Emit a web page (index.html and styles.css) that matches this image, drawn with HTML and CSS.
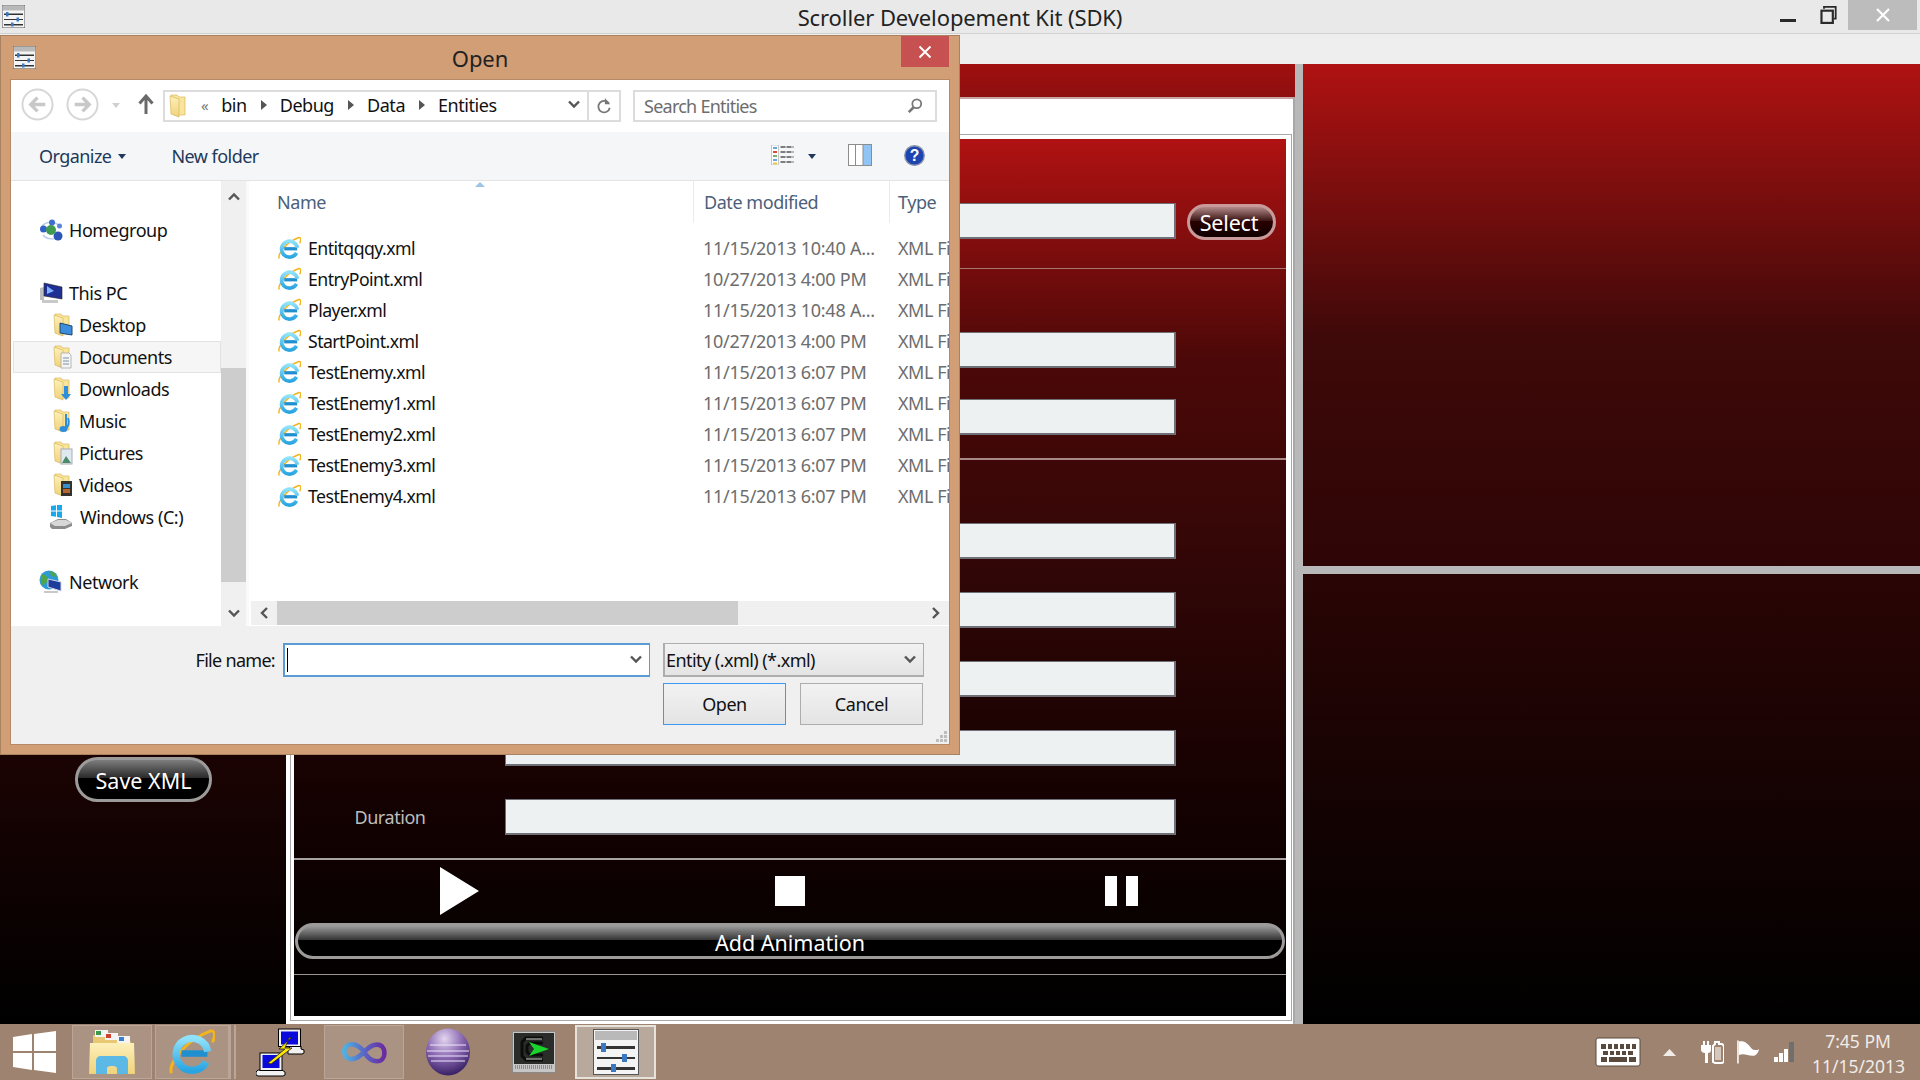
FILE: index.html
```html
<!DOCTYPE html>
<html lang="en">
<head>
<meta charset="utf-8">
<title>Scroller Developement Kit (SDK)</title>
<link rel="stylesheet" href="styles.css">
</head>
<body>
<svg class="defs" aria-hidden="true">
  <defs>
    <linearGradient id="gFolder" x1="0" y1="0" x2="0" y2="1"><stop offset="0" stop-color="#fdf0ba"/><stop offset="1" stop-color="#f0d27a"/></linearGradient>
    <linearGradient id="gE" x1="0" y1="0" x2="0" y2="1"><stop offset="0" stop-color="#8fe2fa"/><stop offset="1" stop-color="#2aa5e2"/></linearGradient>
    <radialGradient id="gSphere" cx=".42" cy=".22" r=".9"><stop offset="0" stop-color="#e2d6ee"/><stop offset=".45" stop-color="#8a68b2"/><stop offset=".85" stop-color="#3c2468"/><stop offset="1" stop-color="#2a1650"/></radialGradient>
    <linearGradient id="gInf" x1="0" y1="0" x2="1" y2="0"><stop offset="0" stop-color="#4fb0e2"/><stop offset=".5" stop-color="#5a66c4"/><stop offset="1" stop-color="#6a2aa0"/></linearGradient>
    <symbol id="i-app" viewBox="0 0 46 46">
      <rect x=".5" y=".5" width="45" height="45" fill="#f4f4f4" stroke="#555"/>
      <rect x="2" y="2" width="42" height="9" fill="#b9b9b9"/>
      <rect x="4" y="17" width="38" height="3" fill="#333"/><rect x="8" y="14" width="5" height="9" fill="#3b78c4"/>
      <rect x="4" y="28" width="38" height="2" fill="#333"/><rect x="29" y="25" width="5" height="8" fill="#3b78c4"/>
      <rect x="4" y="38" width="38" height="3" fill="#333"/><rect x="18" y="35" width="5" height="8" fill="#3b78c4"/>
    </symbol>
    <symbol id="i-ie" viewBox="0 0 24 24">
      <path d="M1.300 23C-.6 18.500 8 6 21.800 1c2.200-.4 2.400 2.600.9 6" fill="none" stroke="#f2b51f" stroke-width="1.500"/>
      <path d="M6.500 12.800h13.500" stroke="#1f8fd0" stroke-width="3.400"/>
      <path d="M19.300 17.200A8.300 8.300 0 1 1 20.200 11.800" fill="none" stroke="url(#gE)" stroke-width="3.800"/>
    </symbol>
    <symbol id="i-folder" viewBox="0 0 20 24">
      <path d="M2 1h6l2 2h6v18H5z" fill="#f9e49b" stroke="#d9b75c" stroke-width=".7"/>
      <path d="M1 2l9 3v18l-8-3z" fill="url(#gFolder)" stroke="#d9b75c" stroke-width=".7"/>
    </symbol>
    <symbol id="i-back" viewBox="0 0 34 34">
      <circle cx="17" cy="17" r="15.500" fill="#fff" stroke="#d6d6d6" stroke-width="2"/>
      <path d="M25 17H11M17 10l-7 7 7 7" fill="none" stroke="#c8c8c8" stroke-width="3.400"/>
    </symbol>
    <symbol id="i-chev" viewBox="0 0 14 10">
      <path d="M2 1.500l5 5 5-5" fill="none" stroke="#555" stroke-width="2.400"/>
    </symbol>
  </defs>
</svg>

<div class="app">
  <header class="titlebar">
    <div class="tb-left"><svg class="tb-icon"><use href="#i-app"/></svg></div>
    <div class="tb-title">Scroller Developement Kit (SDK)</div>
    <div class="tb-right">
      <svg class="wc-min" viewBox="0 0 16 3"><rect width="16" height="3" fill="#2a2a2a"/></svg>
      <svg class="wc-res" viewBox="0 0 18 20"><path d="M4 3V1h13v13h-2" fill="none" stroke="#2a2a2a" stroke-width="2"/><rect x="1.200" y="5.200" width="12.600" height="13.600" fill="none" stroke="#2a2a2a" stroke-width="2.400"/></svg>
      <div class="wc-close"><svg viewBox="0 0 14 14" class="wc-x"><path d="M1 1l12 12M13 1L1 13" stroke="#fff" stroke-width="2.200"/></svg></div>
    </div>
  </header>
  <div class="menustrip"></div>
  <main class="workspace">
    <aside class="left">
      <button class="gloss btn-save">Save XML</button>
    </aside>
    <section class="center">
      <div class="strip"></div>
      <div class="frame">
        <div class="inset">
          <div class="panel">
            <div class="sec sec-a">
              <div class="row"><div class="label"></div><div class="input"></div><button class="gloss btn-select">Select</button></div>
            </div>
            <div class="sec sec-b">
              <div class="row"><div class="label"></div><div class="input"></div></div>
              <div class="row"><div class="label"></div><div class="input"></div></div>
            </div>
            <div class="sec sec-c">
              <div class="row"><div class="label"></div><div class="input"></div></div>
              <div class="row"><div class="label"></div><div class="input"></div></div>
              <div class="row"><div class="label"></div><div class="input"></div></div>
              <div class="row"><div class="label"></div><div class="input"></div></div>
              <div class="row"><div class="label">Duration</div><div class="input"></div></div>
            </div>
            <div class="controls">
              <svg class="c-play" viewBox="0 0 39 48"><path d="M0 0l39 24L0 48z" fill="#fff"/></svg>
              <div class="c-stop"></div>
              <div class="c-pause"><span></span><span></span></div>
            </div>
            <button class="gloss btn-add">Add Animation</button>
            <div class="panel-rule"></div>
          </div>
        </div>
      </div>
    </section>
    <div class="vsplit"></div>
    <section class="right">
      <div class="r-top"></div>
      <div class="hsplit"></div>
      <div class="r-bottom"></div>
    </section>
  </main>
</div>

<div class="dialog">
  <div class="dlg-head">
    <svg class="dlg-icon"><use href="#i-app"/></svg>
    <div class="dlg-title">Open</div>
    <div class="dlg-close"><svg viewBox="0 0 14 14" class="wc-x"><path d="M1.500 1.500l11 11M12.500 1.500l-11 11" stroke="#fff" stroke-width="2"/></svg></div>
  </div>
  <div class="dlg-body">
    <div class="addr-row">
      <svg class="nav-btn"><use href="#i-back"/></svg>
      <svg class="nav-btn nav-fwd"><use href="#i-back"/></svg>
      <svg class="nav-drop" viewBox="0 0 8 5"><path d="M0 0h8L4 5z" fill="#d0d0d0"/></svg>
      <svg class="nav-up" viewBox="0 0 16 20"><path d="M8 20V3M1.500 9.500L8 2l6.500 7.500" fill="none" stroke="#6a6a6a" stroke-width="3"/></svg>
      <div class="addr">
        <svg class="addr-folder" viewBox="0 0 17 24"><use href="#i-folder" width="20" height="24"/></svg>
        <span class="crumb-more">«</span>
        <span class="crumb">bin</span><i class="tri"></i>
        <span class="crumb">Debug</span><i class="tri"></i>
        <span class="crumb">Data</span><i class="tri"></i>
        <span class="crumb">Entities</span>
        <svg class="addr-chev"><use href="#i-chev"/></svg>
        <div class="addr-ref"><svg viewBox="0 0 18 20" class="ref-icon"><path d="M14.500 7A6.500 6.500 0 1 0 15.500 12" fill="none" stroke="#777" stroke-width="2"/><path d="M10 1v7h6z" fill="#777"/></svg></div>
      </div>
      <div class="search">
        <span>Search Entities</span>
        <svg class="search-icon" viewBox="0 0 18 18"><circle cx="11" cy="7" r="5" fill="none" stroke="#777" stroke-width="2"/><path d="M7.500 11L2 16.500" stroke="#777" stroke-width="3"/></svg>
      </div>
    </div>
    <div class="toolbar">
      <span class="tool">Organize</span><i class="caret"></i>
      <span class="tool tool-new">New folder</span>
      <svg class="view-icon" viewBox="0 0 22 20"><rect x="0" y="0" width="7" height="20" fill="#fff" stroke="#b9b9b9" stroke-width=".8"/><path d="M1.500 3h4" stroke="#6aa7d8" stroke-width="2"/><path d="M1.500 7h4" stroke="#d94a3a" stroke-width="2"/><path d="M1.500 11h4" stroke="#7cb36a" stroke-width="2"/><path d="M1.500 15h4" stroke="#6aa7d8" stroke-width="2"/><path d="M1.500 18.500h4" stroke="#e6c34a" stroke-width="2"/><path d="M9 2h13M9 7h13M9 12h13M9 17h13" stroke="#555" stroke-width="1.400" stroke-dasharray="5 1"/></svg>
      <i class="caret caret-view"></i>
      <svg class="pane-icon" viewBox="0 0 24 22"><rect x=".5" y=".5" width="23" height="21" fill="#fff" stroke="#8d8d8d"/><rect x="15" y="1" width="8" height="20" fill="#8fc4f4"/><path d="M7.500 1v20M15 1v20" stroke="#8d8d8d"/></svg>
      <svg class="help-icon" viewBox="0 0 20 20"><circle cx="10" cy="10" r="9.300" fill="#1e44b0" stroke="#8b93a8" stroke-width="1.300"/><text x="10" y="15" text-anchor="middle" class="help-q">?</text></svg>
    </div>
    <div class="browser">
      <nav class="navpane">
        <div class="nav-item top"><svg class="ic-net" viewBox="0 0 24 22"><path d="M3 7c5-5 14-5 18 1M4 16c4 5 12 5 17 1" fill="none" stroke="#b9cbe8" stroke-width="1.500"/><circle cx="4.500" cy="10" r="3.500" fill="#2f62c8"/><circle cx="13" cy="3.500" r="3" fill="#3c6fd0"/><circle cx="19" cy="17" r="4.500" fill="#2b54b8"/><circle cx="20.500" cy="7" r="2.500" fill="#5a86dc"/><circle cx="12" cy="11" r="5" fill="#3d9a4e"/></svg><span>Homegroup</span></div>
        <div class="nav-item top gap-a"><svg class="ic-net" viewBox="0 0 24 22"><path d="M1 18V6l4-1v13z" fill="#bdbdbd"/><path d="M5 1l18 4v12L5 14z" fill="#1f2f94" stroke="#222" stroke-width=".6"/><path d="M8 4l7 5-7 3z" fill="#7fb1ff"/><path d="M3 18h16v3H3z" fill="#c9c9c9"/></svg><span>This PC</span></div>
        <div class="nav-item"><svg class="ic-fold" viewBox="0 0 20 24"><use href="#i-folder" width="20" height="24"/><path d="M7 10l12 3v9L7 20z" fill="#3d8edc" stroke="#23466e"/></svg><span>Desktop</span></div>
        <div class="nav-item sel"><svg class="ic-fold" viewBox="0 0 20 24"><use href="#i-folder" width="20" height="24"/><path d="M8 8h8l2 2v13H8z" fill="#f4f4f4" stroke="#a8a8a8" stroke-width=".8"/><path d="M10 13h6M10 16h6M10 19h6" stroke="#7d8fa8"/></svg><span>Documents</span></div>
        <div class="nav-item"><svg class="ic-fold" viewBox="0 0 20 24"><use href="#i-folder" width="20" height="24"/><path d="M11 9v8H8l5 6 5-6h-3V9z" fill="#2d8fdc"/></svg><span>Downloads</span></div>
        <div class="nav-item"><svg class="ic-fold" viewBox="0 0 20 24"><use href="#i-folder" width="20" height="24"/><path d="M13 5v15c2-3 4-6 2-11" fill="none" stroke="#2d8fdc" stroke-width="2"/><ellipse cx="10.500" cy="20" rx="4" ry="3" fill="#2d8fdc"/></svg><span>Music</span></div>
        <div class="nav-item"><svg class="ic-fold" viewBox="0 0 20 24"><use href="#i-folder" width="20" height="24"/><rect x="8" y="8" width="11" height="15" fill="#dfeaf0" stroke="#aab"/><path d="M9 22l4-7 5 7z" fill="#4b8a6a"/></svg><span>Pictures</span></div>
        <div class="nav-item"><svg class="ic-fold" viewBox="0 0 20 24"><use href="#i-folder" width="20" height="24"/><rect x="8" y="8" width="11" height="15" fill="#33322e"/><rect x="10" y="11" width="7" height="4" fill="#3a8fc8"/><rect x="10" y="16" width="7" height="4" fill="#b5662e"/></svg><span>Videos</span></div>
        <div class="nav-item"><svg class="ic-drive" viewBox="0 0 24 24"><path d="M1 18l8-4h8l6 4v3l-7 3H3l-2-2z" fill="#8d8d8d"/><path d="M1 18l5 3h10l7-3-6-3H9z" fill="#d8d8d8"/><path d="M2 1l5-.8v5.300H2zM8 0l5-1v6.500H8zM2 6.500h5v5.300L2 11zM8 6.500h5V13l-5-1z" fill="#18a8ee"/></svg><span class="drive">Windows (C:)</span></div>
        <div class="nav-item top gap-b"><svg class="ic-net" viewBox="0 0 24 24"><circle cx="10" cy="10" r="9.500" fill="#2d9ad8"/><path d="M4 4c3 1 5 3 5 6s-4 3-5 6c-3-3-3-9 0-12zM11 1c4 1 6 3 7 6l-6-1z" fill="#4fa64a"/><path d="M9 9l13 3v9l-13-4z" fill="#1e3c9c" stroke="#cfd6e6"/><path d="M5 21h14v2H5z" fill="#c9c9c9"/></svg><span>Network</span></div>
      </nav>
      <div class="vscroll">
        <svg class="sb-arrow up" viewBox="0 0 14 10"><path d="M2 8.500l5-5 5 5" fill="none" stroke="#555" stroke-width="2.400"/></svg>
        <div class="vthumb"></div>
        <svg class="sb-arrow down"><use href="#i-chev"/></svg>
      </div>
      <div class="pane-gap"></div>
      <div class="files">
        <div class="cols">
          <div class="col col-name">Name<i class="sort"></i></div>
          <div class="col col-date">Date modified</div>
          <div class="col col-type">Type</div>
        </div>
        <div class="rows">
          <div class="frow"><div class="f-name"><svg class="ic-ie"><use href="#i-ie"/></svg>Entitqqqy.xml</div><div class="f-date">11/15/2013 10:40 A...</div><div class="f-type">XML File</div></div>
          <div class="frow"><div class="f-name"><svg class="ic-ie"><use href="#i-ie"/></svg>EntryPoint.xml</div><div class="f-date">10/27/2013 4:00 PM</div><div class="f-type">XML File</div></div>
          <div class="frow"><div class="f-name"><svg class="ic-ie"><use href="#i-ie"/></svg>Player.xml</div><div class="f-date">11/15/2013 10:48 A...</div><div class="f-type">XML File</div></div>
          <div class="frow"><div class="f-name"><svg class="ic-ie"><use href="#i-ie"/></svg>StartPoint.xml</div><div class="f-date">10/27/2013 4:00 PM</div><div class="f-type">XML File</div></div>
          <div class="frow"><div class="f-name"><svg class="ic-ie"><use href="#i-ie"/></svg>TestEnemy.xml</div><div class="f-date">11/15/2013 6:07 PM</div><div class="f-type">XML File</div></div>
          <div class="frow"><div class="f-name"><svg class="ic-ie"><use href="#i-ie"/></svg>TestEnemy1.xml</div><div class="f-date">11/15/2013 6:07 PM</div><div class="f-type">XML File</div></div>
          <div class="frow"><div class="f-name"><svg class="ic-ie"><use href="#i-ie"/></svg>TestEnemy2.xml</div><div class="f-date">11/15/2013 6:07 PM</div><div class="f-type">XML File</div></div>
          <div class="frow"><div class="f-name"><svg class="ic-ie"><use href="#i-ie"/></svg>TestEnemy3.xml</div><div class="f-date">11/15/2013 6:07 PM</div><div class="f-type">XML File</div></div>
          <div class="frow"><div class="f-name"><svg class="ic-ie"><use href="#i-ie"/></svg>TestEnemy4.xml</div><div class="f-date">11/15/2013 6:07 PM</div><div class="f-type">XML File</div></div>
        </div>
        <div class="hscroll">
          <svg class="hs-arrow" viewBox="0 0 10 14"><path d="M8 2L3 7l5 5" fill="none" stroke="#555" stroke-width="2.400"/></svg>
          <div class="hthumb"></div>
          <svg class="hs-arrow hs-right" viewBox="0 0 10 14"><path d="M2 2l5 5-5 5" fill="none" stroke="#555" stroke-width="2.400"/></svg>
        </div>
      </div>
    </div>
    <div class="dlg-foot">
      <div class="foot-row">
        <label class="fn-label">File name:</label>
        <div class="fn-combo"><i class="text-caret"></i><svg class="combo-chev"><use href="#i-chev"/></svg></div>
        <div class="filter"><span>Entity (.xml) (*.xml)</span><svg class="combo-chev"><use href="#i-chev"/></svg></div>
      </div>
      <div class="foot-btns">
        <button class="dbtn dbtn-default">Open</button>
        <button class="dbtn">Cancel</button>
      </div>
      <svg class="grip" viewBox="0 0 12 12"><path d="M8 0h3v3H8zM4 4h3v3H4zM8 4h3v3H8zM0 8h3v3H0zM4 8h3v3H4zM8 8h3v3H8z" fill="#bdbdbd"/></svg>
    </div>
  </div>
</div>

<footer class="taskbar">
  <svg class="start" viewBox="0 0 43 42"><path d="M0 6l19-3v17H0zM21 3l22-3v20H21zM0 22h19v17L0 36zM21 22h22v20l-22-3z" fill="#fff"/></svg>
  <div class="tile t-exp">
    <svg viewBox="0 0 46 46" class="tk-icon"><path d="M4 6h16l2 3h18l2 5v4H4z" fill="#e9c873"/><rect x="6" y="1" width="13" height="7" fill="#f4f4f4"/><rect x="7" y="2" width="5" height="4" fill="#3a9a4a"/><rect x="16" y="4" width="13" height="7" fill="#f4f4f4"/><rect x="17" y="5" width="5" height="4" fill="#d2402e"/><rect x="28" y="7" width="13" height="7" fill="#f4f4f4"/><rect x="30" y="8" width="5" height="4" fill="#3a80d2"/><path d="M1 14h44l1 31H0z" fill="url(#gFolder)"/><path d="M7 45V32c0-3 2-5 5-5h22c3 0 5 2 5 5v13H28v-5c0-2-1-3-5-3s-5 1-5 3v5z" fill="#5cb8e4"/></svg>
  </div>
  <div class="tile t-ie"><svg class="tk-ie"><use href="#i-ie"/></svg></div>
  <div class="grip-lines"></div>
  <div class="slot s-putty">
    <svg viewBox="0 0 49 50" class="tk-putty"><path d="M35 19h10v3l3 1v3l-2 1H32v-5z" fill="#f1f1f1" stroke="#000"/><rect x="22.500" y="2" width="22" height="17.500" fill="#f1f1f1" stroke="#000"/><rect x="25" y="4.500" width="17" height="13" fill="#0a0adc"/><path d="M2 43h24l3 2v3l-2 1H2l-2-1v-3z" fill="#f1f1f1" stroke="#000"/><rect x="4" y="26" width="22" height="17.500" fill="#f1f1f1" stroke="#000"/><rect x="6.500" y="28" width="17" height="13" fill="#0a0adc"/><path d="M36 10L23 22h6L12 36l3 1 21-16h-7l4-10z" fill="#ffe800" stroke="#222" stroke-width=".8"/></svg>
  </div>
  <div class="tile t-vs">
    <svg viewBox="0 0 48 28" class="tk-vs"><path d="M24 14C19 7 14 5 9 6 4 7 2 11 3 15c1 5 6 8 11 6 4-1 7-4 10-7s7-8 14-8c5 0 8 4 8 9s-3 9-8 9c-6 0-11-5-14-10" fill="none" stroke="url(#gInf)" stroke-width="5"/></svg>
  </div>
  <div class="slot s-ecl">
    <svg viewBox="0 0 46 48" class="tk-ecl"><ellipse cx="23" cy="24" rx="22" ry="23.500" fill="url(#gSphere)"/><path d="M5 17h36M2 23h42M3 28h40M6 33h34" stroke="#efe6fb" stroke-width="1.200" fill="none"/></svg>
  </div>
  <div class="slot s-cyg">
    <svg viewBox="0 0 44 42" class="tk-cyg"><rect x=".5" y=".5" width="43" height="41" fill="#c6c6c6" stroke="#888"/><rect x="2" y="2" width="40" height="31" fill="#2a2c2a"/><path d="M31 7H14l-4 4v14l4 4h17M31 12H18l-3 3v6l3 3h13" fill="none" stroke="#0c0c0c" stroke-width="3"/><path d="M14 8h16M14 28h16" stroke="#8d8d8d" stroke-width="1.500"/><path d="M17 11l20 7-20 7 5-7z" fill="#19d42a"/><path d="M3 36h38" stroke="#8e8e8e" stroke-width="4" stroke-dasharray="1 1"/></svg>
  </div>
  <div class="tile t-app"><svg class="tk-app"><use href="#i-app"/></svg></div>
  <div class="tray">
    <svg class="tr-kbd" viewBox="0 0 46 30"><rect x="1" y="1" width="44" height="28" rx="2" fill="#fff" stroke="#5a4a3d"/><path d="M6 7h5v5H6zM13 7h4v5h-4zM19 7h4v5h-4zM25 7h4v5h-4zM31 7h4v5h-4zM37 7h4v5h-4zM8 14h5v4H8zM15 14h4v4h-4zM21 14h4v4h-4zM27 14h4v4h-4zM33 14h5v4h-5zM6 20h6v5H6zM14 20h18v5H14zM34 20h7v5h-7z" fill="#5a4a3d"/></svg>
    <svg class="tr-caret" viewBox="0 0 13 7"><path d="M0 7l6.500-7L13 7z" fill="#f1ece8"/></svg>
    <svg class="tr-pow" viewBox="0 0 24 24"><path d="M1 5h2V1h2v4h2V1h2v4h2v5c0 2-1 3-3 3v10H5V13c-2 0-4-1-4-3z" fill="#fff"/><path d="M15 2h4v2h3l2 2v16l-2 1h-7l-2-1V6l2-2z" fill="none" stroke="#fff" stroke-width="2"/><rect x="15" y="7" width="6" height="13" fill="#fff" opacity=".55"/></svg>
    <svg class="tr-flag" viewBox="0 0 24 24"><path d="M1 0v24" stroke="#fff" stroke-width="1.600"/><path d="M2 1c6-1 9 2 13 7 3 3 6 2 8 1-1 4-3 7-7 7-5 0-8-3-14-1z" fill="#fff"/></svg>
    <svg class="tr-sig" viewBox="0 0 21 20"><path d="M0 15h4v5H0zM5 11h4v9H5zM10 7h4v13h-4z" fill="#fff"/><path d="M15 0h5v20h-5z" fill="#6f6f6f"/></svg>
    <div class="clock"><div>7:45 PM</div><div>11/15/2013</div></div>
  </div>
</footer>
</body>
</html>
```

FILE: styles.css
```css
* { box-sizing: border-box; }
html, body { margin: 0; height: 100%; }
body {
  width: 1920px; height: 1080px; overflow: hidden; position: relative;
  display: flex; flex-direction: column;
  font-family: "Noto Sans", "Open Sans", sans-serif; font-size: 18px; color: #111;
  letter-spacing: -0.45px;
}
svg { display: block; flex: none; }
.defs { position: absolute; width: 0; height: 0; }
button { font: inherit; letter-spacing: inherit; padding: 0; margin: 0; }

/* main window */
.app { height: 1024px; display: flex; flex-direction: column; }
.titlebar { height: 34px; background: #e9e9e9; border-bottom: 1px solid #d2d2d2; display: grid; grid-template-columns: 1fr auto 1fr; }
.tb-left { padding: 5px 0 0 2px; }
.tb-icon { width: 23px; height: 23px; }
.tb-title { font-size: 22px; line-height: 34px; color: #222; letter-spacing: -0.1px; }
.tb-right { display: flex; justify-content: flex-end; align-items: flex-start; padding-right: 3px; }
.wc-min { width: 16px; height: 3px; margin-top: 19px; }
.wc-res { width: 19px; height: 18px; margin: 6px 0 0 23px; }
.wc-close { width: 69px; height: 30px; margin-left: 10px; background: #bcbcbc; display: flex; align-items: center; justify-content: center; }
.wc-x { width: 14px; height: 14px; }
.menustrip { height: 30px; background: #eeeeee; }
.workspace { flex: 1; display: flex; min-height: 0; }

.left { width: 286px; padding: 0 0 222px 75px; display: flex; flex-direction: column; justify-content: flex-end; align-items: flex-start; background: linear-gradient(#b01212, #3f0909 31%, #2e0505 53%, #000); }
.gloss { border: 3px solid #9d9a9a; border-radius: 40px; color: #fff; background: linear-gradient(#7d7d7d, #2a2a2a 46%, #000 47%); text-align: center; letter-spacing: 0; }
.btn-save { width: 137px; height: 45px; padding-top: 2px; font-size: 21.5px; line-height: 36px; }

.center { width: 1009px; display: flex; flex-direction: column; background: #fff; border-right: 2px solid #a8a8a8; }
.strip { height: 33px; background: linear-gradient(#a01010, #8e0f0f); margin-right: -2px; }
.frame { flex: 1; border-top: 2px solid #c8a4a4; padding: 35px 1px 3px 4px; display: flex; min-height: 0; }
.inset { flex: 1; border: 1px solid #a8a8a8; padding: 4px 5px 4px 3px; display: flex; min-width: 0; }
.panel { flex: 1; display: flex; flex-direction: column; background: linear-gradient(#b01212, #4c0808 25%, #2e0606 52%, #150101 75%, #000); }
.sec { border-bottom: 1px solid #a77; }
.row { display: flex; align-items: center; }
.label { width: 211px; padding-right: 19px; text-align: center; font-size: 18px; color: #bdbdbd; }
.input { width: 671px; height: 36px; background: #edf1f2; border: 1px solid #6f6f78; border-width: 1px 2px 2px 1px; }
.sec-a { height: 130px; padding-top: 62px; }
.btn-select { width: 89px; height: 36px; margin: 3px 0 0 11px; padding-right: 5px; font-size: 21.5px; line-height: 32px; letter-spacing: -0.2px; border-color: #c99a9a; background: linear-gradient(#b48a8a, #3a1414 46%, #2a0000 47%, #100000); }
.sec-b { height: 191px; padding-top: 63px; display: flex; flex-direction: column; gap: 31px; border-bottom: 2px solid #a88; }
.sec-c { height: 400px; padding-top: 63px; display: flex; flex-direction: column; gap: 33px; border-bottom: 2px solid #a8a2a2; }
.controls { height: 63px; display: grid; grid-template-columns: repeat(3, 1fr); justify-items: center; align-items: center; padding-bottom: 1px; }
.c-play { width: 39px; height: 48px; }
.c-stop { width: 30px; height: 30px; background: #fff; }
.c-pause { width: 33px; height: 30px; margin-left: 1px; display: flex; justify-content: space-between; }
.c-pause span { width: 12px; background: #fff; }
.btn-add { height: 36px; margin: 0 1px; font-size: 21.5px; line-height: 33px; background: linear-gradient(#9b9b9b, #333 47%, #000 48%); }
.panel-rule { height: 1px; margin-top: 15px; background: #999; }

.vsplit { width: 8px; background: #b8b8b8; }
.right { flex: 1; display: flex; flex-direction: column; }
.r-top { height: 502px; background: linear-gradient(#b01212, #3f0909 54%, #2e0505); }
.hsplit { height: 8px; background: #b8b8b8; }
.r-bottom { flex: 1; background: linear-gradient(#2a0505, #000); }

/* dialog: a window lying over the app */
.dialog { position: absolute; left: 0; top: 35px; width: 960px; height: 720px; background: #d19e76; border: 1px solid #a98361; padding: 0 10px 10px; display: flex; flex-direction: column; }
.dlg-head { height: 44px; display: grid; grid-template-columns: 1fr auto 1fr; flex: none; }
.dlg-icon { width: 23px; height: 23px; margin: 10px 0 0 2px; }
.dlg-title { font-size: 22px; line-height: 44px; color: #222; letter-spacing: -0.1px; }
.dlg-close { justify-self: end; width: 48px; height: 31px; background: #c75050; display: flex; align-items: center; justify-content: center; }
.dlg-body { flex: 1; display: flex; flex-direction: column; background: #f0f0f0; min-height: 0; outline: 1px solid #b58a66; }

.addr-row { height: 52px; flex: none; background: #fff; display: flex; align-items: flex-start; padding: 8px 0 0 10px; }
.nav-btn { width: 33px; height: 33px; }
.nav-fwd { margin-left: 12px; transform: scaleX(-1); }
.nav-drop { width: 8px; height: 5px; margin: 15px 0 0 13px; }
.nav-up { width: 16px; height: 20px; margin: 6px 0 0 18px; }
.addr { width: 458px; height: 32px; margin: 2px 0 0 9px; border: 2px solid #dcdcdc; display: flex; align-items: center; padding: 0 0 2px 2px; font-size: 18px; }
.addr-folder { width: 21px; height: 24px; margin-top: 2px; }
.crumb-more { margin-left: 13px; color: #777; font-size: 15px; }
.crumb { margin-left: 13px; }
.tri { width: 0; height: 0; border: 5px solid transparent; border-left: 6px solid #555; border-right: 0; margin-left: 14px; }
.addr-chev { width: 14px; height: 10px; margin-left: auto; margin-right: 6px; }
.addr-ref { width: 32px; height: 30px; margin-bottom: -2px; border-left: 2px solid #dcdcdc; display: flex; align-items: center; justify-content: center; }
.ref-icon { width: 16px; height: 18px; }
.search { width: 304px; height: 32px; margin: 2px 0 0 12px; border: 2px solid #dcdcdc; display: flex; align-items: center; justify-content: space-between; padding: 0 12px 0 9px; color: #6d6d6d; letter-spacing: -0.75px; }
.search-icon { width: 16px; height: 17px; margin-top: -2px; }

.toolbar { height: 49px; flex: none; background: #f5f6f7; border-bottom: 1px solid #e4e4e4; display: flex; align-items: center; padding-left: 28px; color: #1e395b; letter-spacing: -0.55px; }
.caret { width: 0; height: 0; border: 4px solid transparent; border-top: 5px solid #1e395b; border-bottom: 0; margin-left: 7px; }
.tool-new { margin-left: 45px; }
.view-icon { width: 23px; height: 20px; margin-left: 512px; margin-top: -2px; }
.caret-view { margin-left: 14px; }
.pane-icon { width: 24px; height: 22px; margin-left: 32px; margin-top: -2px; }
.help-icon { width: 21px; height: 21px; margin-left: 32px; margin-top: -2px; }
.help-q { font: 700 15px "Liberation Sans", sans-serif; fill: #fff; letter-spacing: 0; }

.browser { height: 445px; flex: none; display: grid; grid-template-columns: 210px 25px 3px 1fr; background: #fff; }
.navpane { padding-top: 33px; }
.nav-item { height: 32px; display: flex; align-items: center; padding-left: 42px; gap: 6px; }
.nav-item.top { padding-left: 28px; gap: 6px; }
.gap-a { margin-top: 31px; }
.gap-b { margin-top: 33px; }
.nav-item.sel { background: #f6f6f6; border: 1px solid #e3e3e3; margin: 0 0 0 2px; padding-left: 39px; }
.ic-net { width: 24px; height: 24px; }
.ic-fold { width: 20px; height: 24px; }
.ic-drive { width: 24px; height: 24px; margin-left: -4px; }
.drive { margin-left: 1px; }
.vscroll { background: #f0f0f0; display: flex; flex-direction: column; align-items: center; }
.sb-arrow { width: 14px; height: 10px; }
.sb-arrow.up { margin: 10px 0 0; }
.sb-arrow.down { margin: auto 0 7px; }
.vthumb { width: 100%; height: 214px; margin-top: 167px; background: #cdcdcd; }
.pane-gap { background: #fafafa; }

.files { display: flex; flex-direction: column; min-width: 0; overflow: hidden; }
.cols, .frow { display: grid; grid-template-columns: 444px 196px 1fr; }
.cols { height: 37px; color: #4c607a; align-items: stretch; flex: none; }
.col { position: relative; line-height: 42px; }
.col-name { padding-left: 28px; }
.col-date { padding-left: 10px; border-left: 1px solid #e6ecf2; }
.col-type { padding-left: 8px; border-left: 1px solid #e6ecf2; }
.sort { position: absolute; left: 226px; top: 1px; border: 5px solid transparent; border-bottom: 5px solid #9cc4e6; border-top: 0; }
.rows { padding-top: 14.5px; flex: 1; }
.frow { height: 31px; align-items: center; white-space: nowrap; }
.f-name { display: flex; align-items: center; gap: 7px; padding-left: 29px; color: #111; font-size: 17.7px; letter-spacing: -0.55px; }
.ic-ie { width: 23px; height: 24px; }
.f-date { padding-left: 10px; color: #6d6d6d; letter-spacing: -0.25px; }
.f-type { padding-left: 9px; color: #6d6d6d; }
.hscroll { height: 24px; margin: 0 0 1px 2px; flex: none; background: #f0f0f0; display: flex; align-items: center; }
.hs-arrow { width: 10px; height: 14px; margin: 0 8px; }
.hthumb { width: 461px; height: 100%; background: #cdcdcd; }
.hs-right { margin-left: auto; margin-right: 8px; }

.dlg-foot { flex: 1; position: relative; padding-top: 17px; background: #f0f0f0; display: flex; flex-direction: column; gap: 6px; }
.foot-row { display: flex; align-items: center; height: 34px; }
.fn-label { width: 264px; text-align: right; letter-spacing: -0.7px; }
.fn-combo { width: 367px; height: 34px; margin-left: 8px; background: #fff; border: 1px solid #5b9bd5; border-width: 2px 1px 2px 2px; display: flex; align-items: center; justify-content: space-between; padding: 0 6px 0 2px; }
.text-caret { width: 1px; height: 24px; background: #000; }
.combo-chev { width: 14px; height: 10px; }
.filter { width: 261px; height: 34px; margin-left: 13px; background: linear-gradient(#f2f2f2, #e4e4e4); border: 2px solid #adadad; border-width: 1px 1px 2px 2px; display: flex; align-items: center; justify-content: space-between; padding: 0 6px 0 1px; letter-spacing: -0.55px; }
.foot-btns { display: flex; gap: 14px; padding-left: 652px; }
.dbtn { width: 123px; height: 42px; background: linear-gradient(#f2f2f2, #e4e4e4); border: 1px solid #adadad; color: #111; }
.dbtn-default { border-color: #3c9bf0; }
.grip { position: absolute; right: 1px; bottom: 1px; width: 12px; height: 12px; }

/* taskbar */
.taskbar { height: 56px; background: #9e8370; display: flex; align-items: center; }
.start { width: 43px; height: 42px; margin: 0 16px 0 13px; }
.tile { height: 54px; background: #ab9383; border: 1px solid #b9a698; display: flex; align-items: center; justify-content: center; }
.t-exp { width: 80px; margin-left: 0; }
.tk-icon { width: 46px; height: 46px; }
.t-ie { width: 74px; margin-left: 3px; }
.tk-ie { width: 46px; height: 48px; }
.grip-lines { width: 7px; height: 54px; border-left: 2px solid #b9a698; border-right: 2px solid #b9a698; }
.slot { display: flex; align-items: center; justify-content: center; }
.s-putty { width: 88px; }
.tk-putty { width: 49px; height: 50px; }
.t-vs { width: 80px; }
.tk-vs { width: 46px; height: 26px; }
.s-ecl { width: 88px; }
.tk-ecl { width: 46px; height: 48px; }
.s-cyg { width: 83px; }
.tk-cyg { width: 44px; height: 42px; }
.t-app { width: 81px; background: #b9a99c; border: 2px solid #e8e2dd; }
.tk-app { width: 46px; height: 46px; }
.tray { margin-left: auto; display: flex; align-items: center; }
.tr-kbd { width: 46px; height: 30px; }
.tr-caret { width: 13px; height: 7px; margin-left: 22px; }
.tr-pow { width: 24px; height: 24px; margin-left: 24px; }
.tr-flag { width: 23px; height: 24px; margin-left: 13px; }
.tr-sig { width: 21px; height: 20px; margin-left: 14px; }
.clock { width: 92px; margin: 4px 16px 0 17px; text-align: center; color: #f1ece8; font-size: 17.5px; line-height: 25px; letter-spacing: 0; }
```
